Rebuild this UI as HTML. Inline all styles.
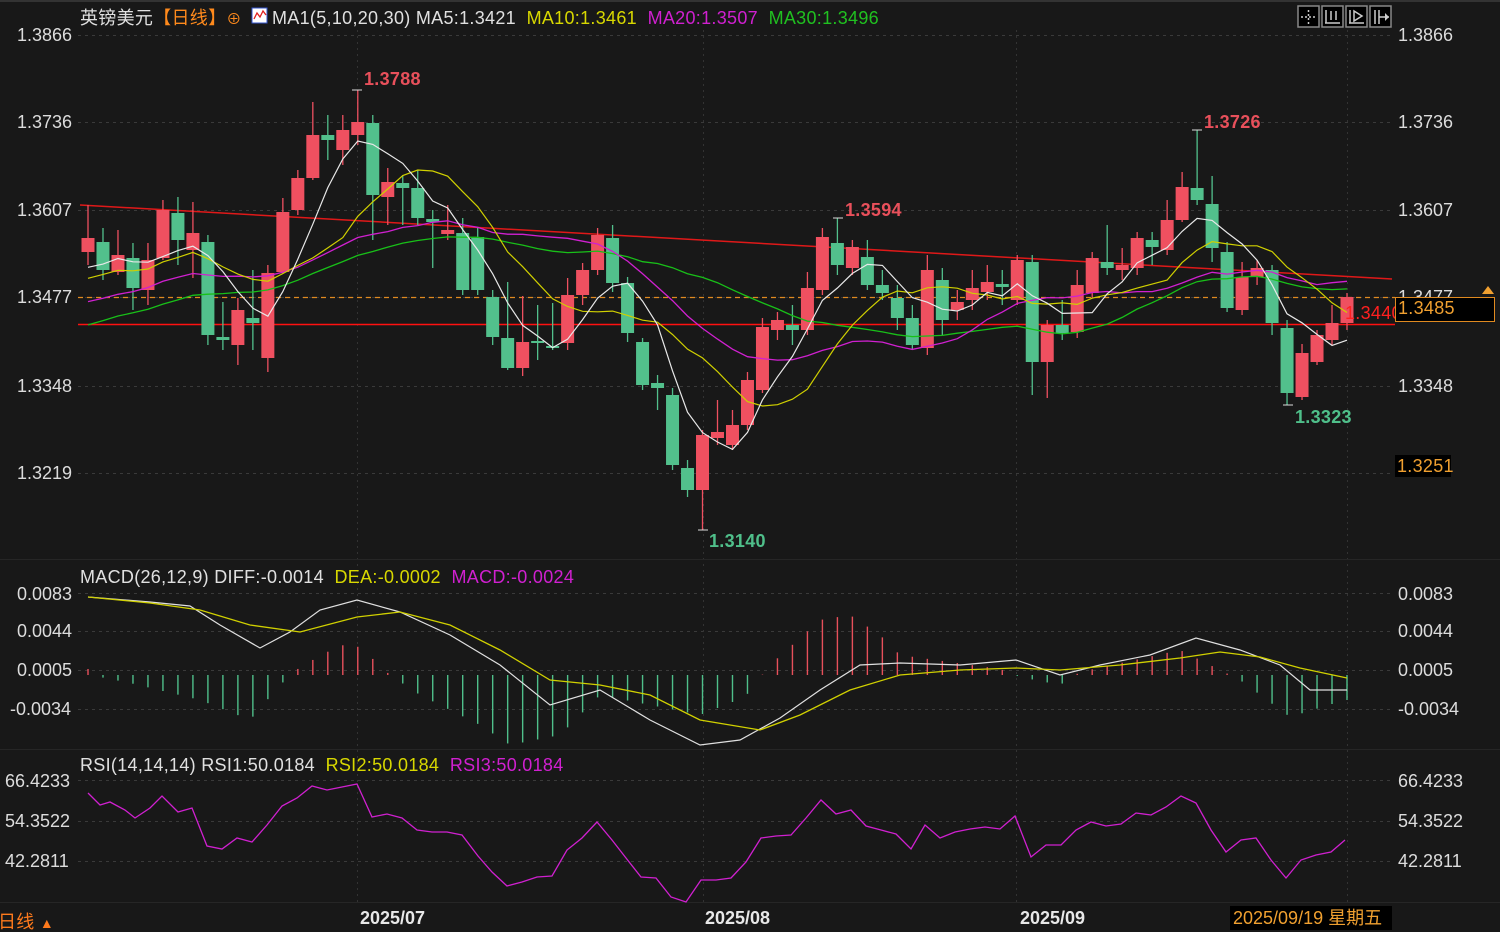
<!DOCTYPE html>
<html><head><meta charset="utf-8"><style>
html,body{margin:0;padding:0;background:#181818;}
#w{position:relative;width:1500px;height:932px;overflow:hidden;background:#181818;font-family:"Liberation Sans","Noto Sans CJK SC",sans-serif;color:#d8d8d8;}
.t{position:absolute;white-space:nowrap;font-size:18px;line-height:20px;letter-spacing:0.3px;}
.ax{position:absolute;font-size:18px;line-height:20px;color:#dcdcdc;}
.b{font-weight:bold;}
svg{position:absolute;left:0;top:0;}
</style></head><body><div id="w">
<svg id="s" width="1500" height="932"></svg>
<div class="t" style="left:80px;top:8px;"><span style="color:#e0e0e0">英镑美元</span><span style="color:#ff8a1c">【日线】</span><span style="color:#ff8a1c;font-size:15px">⊕</span></div>
<div class="t" style="left:272px;top:8px;"><span style="color:#e0e0e0">MA1(5,10,20,30) MA5:1.3421</span>&nbsp;&nbsp;<span style="color:#d8d800">MA10:1.3461</span>&nbsp;&nbsp;<span style="color:#d020d0">MA20:1.3507</span>&nbsp;&nbsp;<span style="color:#20c020">MA30:1.3496</span></div>
<div class="ax" style="left:17px;top:25px">1.3866</div>
<div class="ax" style="left:17px;top:112px">1.3736</div>
<div class="ax" style="left:17px;top:200px">1.3607</div>
<div class="ax" style="left:17px;top:287px">1.3477</div>
<div class="ax" style="left:17px;top:376px">1.3348</div>
<div class="ax" style="left:17px;top:463px">1.3219</div>
<div class="ax" style="left:1398px;top:25px">1.3866</div>
<div class="ax" style="left:1398px;top:112px">1.3736</div>
<div class="ax" style="left:1398px;top:200px">1.3607</div>
<div class="ax" style="left:1398px;top:287px">1.3477</div>
<div class="ax" style="left:1398px;top:376px">1.3348</div>
<div class="t b" style="left:364px;top:69px;color:#e8505b">1.3788</div>
<div class="t b" style="left:845px;top:200px;color:#e8505b">1.3594</div>
<div class="t b" style="left:1204px;top:112px;color:#e8505b">1.3726</div>
<div class="t b" style="left:1295px;top:407px;color:#4fbf8a">1.3323</div>
<div class="t b" style="left:709px;top:531px;color:#4fbf8a">1.3140</div>
<div class="t" style="left:1345px;top:303px;color:#ff2020">1.3440</div>
<div style="position:absolute;left:1395px;top:297px;width:98px;height:23px;border:1px solid #e08a20;background:#000;"></div>
<div class="t" style="left:1398px;top:298px;color:#f0a030">1.3485</div>
<div style="position:absolute;left:1395px;top:455px;width:56px;height:22px;background:#000;"></div>
<div class="t" style="left:1397px;top:456px;color:#f0a030">1.3251</div>
<div class="t" style="left:80px;top:567px;"><span style="color:#e0e0e0">MACD(26,12,9) DIFF:-0.0014</span>&nbsp;&nbsp;<span style="color:#d8d800">DEA:-0.0002</span>&nbsp;&nbsp;<span style="color:#d020d0">MACD:-0.0024</span></div>
<div class="ax" style="left:17px;top:584px">0.0083</div>
<div class="ax" style="left:17px;top:621px">0.0044</div>
<div class="ax" style="left:17px;top:660px">0.0005</div>
<div class="ax" style="left:10px;top:699px">-0.0034</div>
<div class="ax" style="left:1398px;top:584px">0.0083</div>
<div class="ax" style="left:1398px;top:621px">0.0044</div>
<div class="ax" style="left:1398px;top:660px">0.0005</div>
<div class="ax" style="left:1398px;top:699px">-0.0034</div>
<div class="t" style="left:80px;top:755px;"><span style="color:#e0e0e0">RSI(14,14,14) RSI1:50.0184</span>&nbsp;&nbsp;<span style="color:#d8d800">RSI2:50.0184</span>&nbsp;&nbsp;<span style="color:#d020d0">RSI3:50.0184</span></div>
<div class="ax" style="left:5px;top:771px">66.4233</div>
<div class="ax" style="left:5px;top:811px">54.3522</div>
<div class="ax" style="left:5px;top:851px">42.2811</div>
<div class="ax" style="left:1398px;top:771px">66.4233</div>
<div class="ax" style="left:1398px;top:811px">54.3522</div>
<div class="ax" style="left:1398px;top:851px">42.2811</div>
<div class="t" style="left:360px;top:908px;color:#e8e8e8;font-weight:bold;letter-spacing:0">2025/07</div>
<div class="t" style="left:705px;top:908px;color:#e8e8e8;font-weight:bold;letter-spacing:0">2025/08</div>
<div class="t" style="left:1020px;top:908px;color:#e8e8e8;font-weight:bold;letter-spacing:0">2025/09</div>
<div style="position:absolute;left:1230px;top:906px;width:162px;height:24px;background:#000;"></div>
<div class="t" style="left:1233px;top:908px;color:#f0a030;letter-spacing:0">2025/09/19 星期五</div>
<div class="t" style="left:-2px;top:912px;color:#ff7a1c">日线 <span style="font-size:14px">▲</span></div>
</div>
<script>
var S=document.getElementById('s'),out='';
function L(x1,y1,x2,y2,c,w,d){out+='<line x1="'+x1+'" y1="'+y1+'" x2="'+x2+'" y2="'+y2+'" stroke="'+c+'" stroke-width="'+(w||1)+'"'+(d?' stroke-dasharray="'+d+'"':'')+'/>';}
function P(pts,c,w){out+='<polyline fill="none" stroke="'+c+'" stroke-width="'+(w||1.2)+'" points="'+pts.map(function(p){return p[0].toFixed(1)+','+p[1].toFixed(1)}).join(' ')+'"/>';}
[35,122,210,297,386,473].forEach(function(y){L(78,y+0.5,1393,y+0.5,'#3a3a3a',1,'3,4');});
[593,631,670,709].forEach(function(y){L(78,y+0.5,1393,y+0.5,'#3a3a3a',1,'3,4');});
[780,821,861].forEach(function(y){L(78,y+0.5,1393,y+0.5,'#3a3a3a',1,'3,4');});
[357,703,1016,1347].forEach(function(x){L(x+0.5,30,x+0.5,905,'#333',1,'2,4');});
L(0,559.5,1500,559.5,'#262626',1);L(0,749.5,1500,749.5,'#262626',1);L(0,902.5,1500,902.5,'#262626',1);
L(0,1,1500,1,'#333',2);
var C=[[1,238,252,205,265],[0,242,270,228,280],[1,255,272,230,275],[0,258,288,243,310],[1,260,290,243,305],[1,210,258,200,260],[0,213,240,197,265],[1,233,250,202,278],[0,242,335,235,345],[0,337,340,302,350],[1,310,345,298,365],[0,318,323,270,350],[1,273,358,265,372],[1,212,272,198,274],[1,178,210,170,215],[1,135,178,102,180],[0,135,140,115,160],[1,130,150,115,165],[1,122,135,90,145],[0,123,195,115,240],[1,182,197,168,225],[0,183,188,175,225],[0,188,218,170,225],[0,219,222,210,268],[1,230,234,205,240],[0,233,290,218,295],
[0,237,290,228,295],[0,297,337,290,345],[0,338,368,282,370],[1,342,368,296,376],[0,341,343,305,360],[0,346,348,303,350],[1,295,343,278,350],[1,270,295,263,305],[1,235,270,228,275],[0,238,283,225,292],[0,283,333,277,342],[0,342,385,338,390],
[0,383,388,375,410],[0,395,465,388,470],[0,468,490,460,497],[1,435,490,430,530],[1,432,438,400,445],[1,425,445,410,450],[1,380,425,372,430],[1,327,390,318,393],[1,320,330,312,340],[0,325,330,305,345],[1,288,330,272,335],[1,237,290,228,295],[0,243,265,218,275],[1,247,268,240,275],[0,257,285,240,290],[0,285,293,270,300],[0,298,318,285,330],[0,318,345,305,350],[1,270,348,255,355],[0,280,320,268,335],[1,302,310,290,320],[1,288,300,270,310],[1,282,292,265,300],[0,284,287,270,305],[1,260,300,255,305],[0,262,362,255,395],[1,325,362,320,398],[0,325,333,300,340],[1,285,332,270,338],[1,258,293,252,298],[0,262,268,225,275],[1,265,270,248,280],[1,238,268,232,275],[0,240,247,232,265],[1,220,250,200,255],[1,187,220,172,222],[0,188,200,130,205],[0,204,248,176,262],[0,252,308,242,312],[1,277,310,262,315],[1,268,277,260,285],[0,270,323,265,335],[0,328,393,320,405],[1,353,397,344,400],[1,335,362,330,365],[1,323,340,305,345],[1,297,323,293,330]];
var N=C.length,X=[],i;for(i=0;i<N;i++)X.push(88+i*(1347-88)/(N-1));
L(80,205,1392,279,'#e01818',1.5);
L(78,324.5,1395,324.5,'#ff1010',1.5);
L(78,297.5,1395,297.5,'#e08a20',1.2,'5,4');
var closes=[];for(i=0;i<N;i++){var c=C[i];closes.push(c[0]?c[1]:c[2]);}
var pre=[];for(i=0;i<30;i++)pre.push(395-i*4.5+Math.sin(i)*10);
var all=pre.concat(closes);
function ma(n,col,w){var pts=[];for(var i=0;i<N;i++){var s=0,k=30+i;for(var j=0;j<n;j++)s+=all[k-j];pts.push([X[i],s/n]);}P(pts,col,w);}
var body='';
for(i=0;i<N;i++){var c=C[i],col=c[0]?'#ef5060':'#52c08c',x=X[i];
body+='<line x1="'+x+'" y1="'+c[3]+'" x2="'+x+'" y2="'+c[4]+'" stroke="'+col+'" stroke-width="1.3"/>';
var h=Math.max(c[2]-c[1],2);body+='<rect x="'+(x-6.5)+'" y="'+c[1]+'" width="13" height="'+h+'" fill="'+col+'"/>';}
out+=body;
ma(30,'#18c018',1.3);ma(20,'#d020d0',1.3);ma(10,'#d0d000',1.2);ma(5,'#e8e8e8',1.2);
[[357,90],[838,218],[1197,130],[1288,405],[703,530]].forEach(function(p){L(p[0]-5,p[1],p[0]+5,p[1],'#ddd',1);});
function interp(k,x){for(var i=0;i<k.length-1;i++){if(x>=k[i][0]&&x<=k[i+1][0]){var t=(x-k[i][0])/(k[i+1][0]-k[i][0]);return k[i][1]+t*(k[i+1][1]-k[i][1]);}}return k[k.length-1][1];}
var HK=[[88,6],[100,-2],[130,-8],[200,-25],[250,-45],[280,-10],[300,8],[340,30],[360,28],[390,0],[420,-20],[480,-50],[510,-70],[560,-60],[600,-20],[650,-30],[700,-40],[745,-22],[770,10],[820,55],[850,60],[880,40],[900,20],[1000,6],[1020,-2],[1060,-10],[1080,3],[1180,25],[1220,5],[1240,-5],[1290,-42],[1345,-25]];
for(i=0;i<N;i++){var h=interp(HK,X[i]);L(X[i],675,X[i],675-h,h>0?'#e8505b':'#4fbf8a',1.4);}
P([[88,597],[150,602],[190,606],[220,625],[260,648],[290,632],[320,610],[357,600],[400,612],[450,635],[500,665],[550,705],[600,690],[650,720],[700,745],[740,740],[780,718],[820,690],[860,665],[900,663],[960,665],[1016,660],[1060,675],[1100,665],[1150,655],[1196,638],[1240,650],[1280,665],[1310,690],[1347,690]],'#e0e0e0',1.2);
P([[88,597],[150,603],[200,610],[250,625],[300,632],[357,617],[400,612],[450,625],[500,650],[550,680],[600,685],[650,695],[700,720],[760,730],[800,715],[850,690],[900,675],[960,670],[1016,668],[1060,670],[1120,665],[1180,658],[1220,652],[1260,657],[1300,668],[1347,678]],'#d0d000',1.3);
P([[88,793],[100,805],[110,802],[125,810],[135,818],[150,808],[162,796],[178,812],[192,808],[207,846],[222,849],[237,838],[252,842],[267,825],[282,806],[297,798],[312,786],[327,790],[342,787],[357,784],[372,817],[387,814],[402,818],[417,830],[432,832],[447,832],[462,835],[478,856],[492,872],[507,886],[522,882],[537,877],[552,876],[567,850],[582,838],[597,822],[612,840],[626,858],[641,877],[656,878],[671,897],[686,902],[701,880],[716,880],[731,878],[746,862],[761,838],[776,836],[791,835],[806,818],[821,800],[836,814],[851,810],[866,826],[881,830],[896,834],[911,849],[925,825],[940,838],[955,832],[970,829],[985,827],[1000,829],[1015,816],[1031,857],[1046,845],[1061,845],[1076,830],[1091,822],[1106,826],[1121,824],[1136,813],[1151,815],[1166,807],[1181,796],[1196,803],[1211,830],[1226,852],[1241,840],[1256,838],[1271,860],[1286,878],[1301,860],[1316,855],[1331,852],[1345,840]],'#d020d0',1.3);
for(i=0;i<4;i++){var x=1298+i*24;out+='<rect x="'+x+'" y="6" width="21" height="21" fill="#000" stroke="#888" stroke-width="1.5"/>';}
L(1308.5,10,1308.5,24,'#ccc',1.5,'2,2');L(1301,17,1316,17,'#ccc',1.5,'2,2');
L(1326,10,1326,23,'#ccc',1.5);L(1325,23,1340,23,'#ccc',1.5);L(1331,11,1331,20,'#ccc',1.5);L(1336,11,1336,20,'#ccc',1.5);
L(1350,10,1350,23,'#ccc',1.5);L(1349,23,1364,23,'#ccc',1.5);out+='<polygon points="1354,11 1362,16 1354,21" fill="none" stroke="#ccc" stroke-width="1.5"/>';
L(1375,10,1375,24,'#ccc',1.5);L(1379,10,1379,24,'#ccc',1.5);L(1379,17,1389,17,'#ccc',1.5);out+='<polygon points="1385,13 1389,17 1385,21" fill="#ccc"/>';
out+='<rect x="252" y="8" width="15" height="15" fill="#fff" stroke="#3355cc"/><polyline points="254,19 257,13 260,17 263,11 266,15" fill="none" stroke="#e02020" stroke-width="1.3"/>';
out+='<polygon points="1488,286 1494,294 1482,294" fill="#f0a030"/>';
S.innerHTML=out;
</script>
</body></html>
